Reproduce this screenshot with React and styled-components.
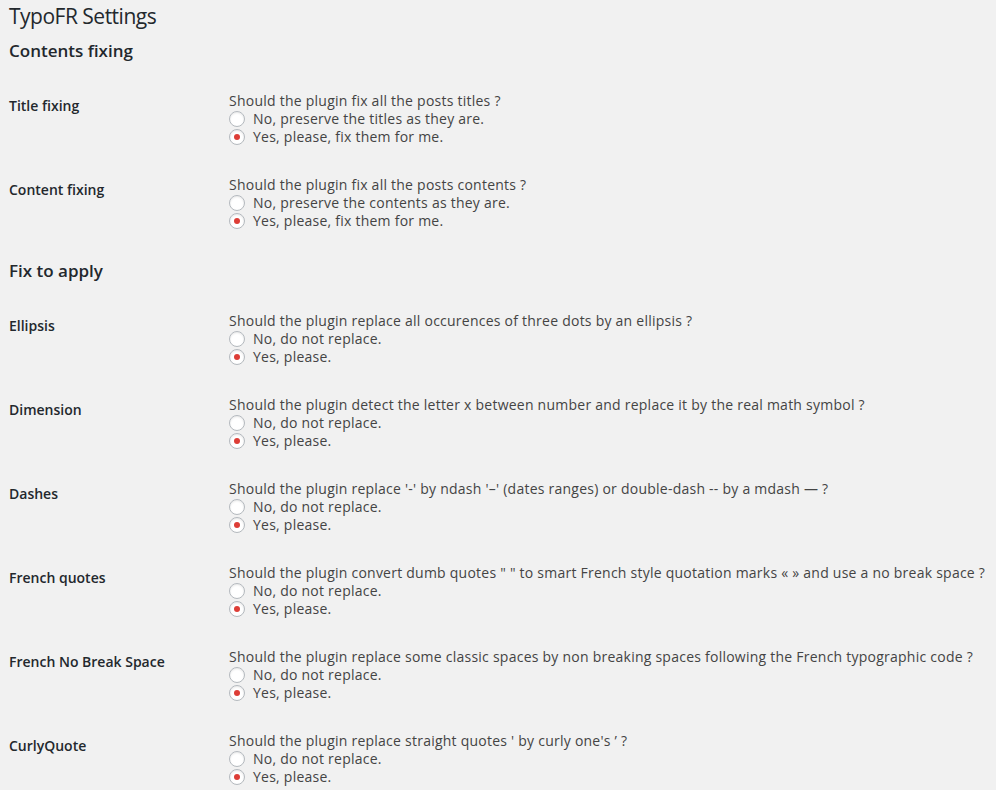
import React from "react";
import styled, { createGlobalStyle } from "styled-components";

const GlobalStyle = createGlobalStyle`
  html, body {
    margin: 0;
    background: #f1f1f1;
  }
  body {
    font-family: "Open Sans", "Liberation Sans", sans-serif;
    font-size: 14px;
    color: #444;
  }
`;

const sections = [
  {
    title: "Contents fixing",
    rows: [
      {
        label: "Title fixing",
        question: "Should the plugin fix all the posts titles ?",
        no: "No, preserve the titles as they are.",
        yes: "Yes, please, fix them for me.",
      },
      {
        label: "Content fixing",
        question: "Should the plugin fix all the posts contents ?",
        no: "No, preserve the contents as they are.",
        yes: "Yes, please, fix them for me.",
      },
    ],
  },
  {
    title: "Fix to apply",
    rows: [
      {
        label: "Ellipsis",
        question:
          "Should the plugin replace all occurences of three dots by an ellipsis ?",
      },
      {
        label: "Dimension",
        question:
          "Should the plugin detect the letter x between number and replace it by the real math symbol ?",
      },
      {
        label: "Dashes",
        question:
          "Should the plugin replace '-' by ndash '\u2013' (dates ranges) or double-dash -- by a mdash \u2014 ?",
      },
      {
        label: "French quotes",
        question:
          "Should the plugin convert dumb quotes \" \" to smart French style quotation marks \u00ab \u00bb and use a no break space ?",
      },
      {
        label: "French No Break Space",
        question:
          "Should the plugin replace some classic spaces by non breaking spaces following the French typographic code ?",
      },
      {
        label: "CurlyQuote",
        question:
          "Should the plugin replace straight quotes ' by curly one's \u2019 ?",
      },
    ],
  },
];

const SettingRow = ({ row, name }) => (
  <Row>
    <Label>{row.label}</Label>
    <Field>
      <Question>{row.question}</Question>
      <Option>
        <Radio type="radio" name={name} value="0" />
        {row.no || "No, do not replace."}
      </Option>
      <Option>
        <Radio type="radio" name={name} value="1" defaultChecked />
        {row.yes || "Yes, please."}
      </Option>
    </Field>
  </Row>
);

const App = () => (
  <Wrap>
    <GlobalStyle />
    <PageTitle>TypoFR Settings</PageTitle>
    {sections.map((section, i) => (
      <Section key={section.title}>
        <SectionTitle first={i === 0}>{section.title}</SectionTitle>
        <Table>
          {section.rows.map((row) => (
            <SettingRow key={row.label} row={row} name={row.label} />
          ))}
        </Table>
      </Section>
    ))}
  </Wrap>
);

export default App;

const Wrap = styled.div`
  padding: 2px 0 0 9px;
`;

const PageTitle = styled.h1`
  margin: 0;
  font-size: 21px;
  font-weight: 400;
  line-height: 29px;
  letter-spacing: -0.5px;
  color: #23282d;
`;

const Section = styled.section`
  display: flex;
  flex-direction: column;
`;

const SectionTitle = styled.h2`
  margin: ${({ first }) => (first ? "8px 0 14px" : "15px 0 14px")};
  font-size: 17px;
  font-weight: 600;
  line-height: 23px;
  color: #23282d;
`;

const Table = styled.div`
  display: flex;
  flex-direction: column;
`;

const Row = styled.div`
  display: grid;
  grid-template-columns: 220px 1fr;
  height: 84px;
`;

const Label = styled.div`
  padding-top: 21px;
  font-size: 14px;
  font-weight: 600;
  line-height: 18px;
  color: #23282d;
`;

const Field = styled.fieldset`
  margin: 0;
  padding: 16px 0 0;
  border: none;
  font-size: 14px;
  letter-spacing: 0.24px;
  line-height: 18px;
  white-space: nowrap;
`;

const Question = styled.div`
  color: #444;
`;

const Option = styled.label`
  display: flex;
  align-items: center;
  height: 18px;
  color: #444;
`;

const Radio = styled.input`
  appearance: none;
  position: relative;
  box-sizing: border-box;
  width: 16px;
  height: 16px;
  margin: 0 8px 0 0;
  border: 1px solid #b4b9be;
  border-radius: 50%;
  background: #fff;
  box-shadow: inset 0 1px 2px rgba(0, 0, 0, 0.1);

  &:checked::before {
    content: "";
    position: absolute;
    top: 4px;
    left: 4px;
    width: 6px;
    height: 6px;
    border-radius: 50%;
    background: #dd3d36;
  }
`;
